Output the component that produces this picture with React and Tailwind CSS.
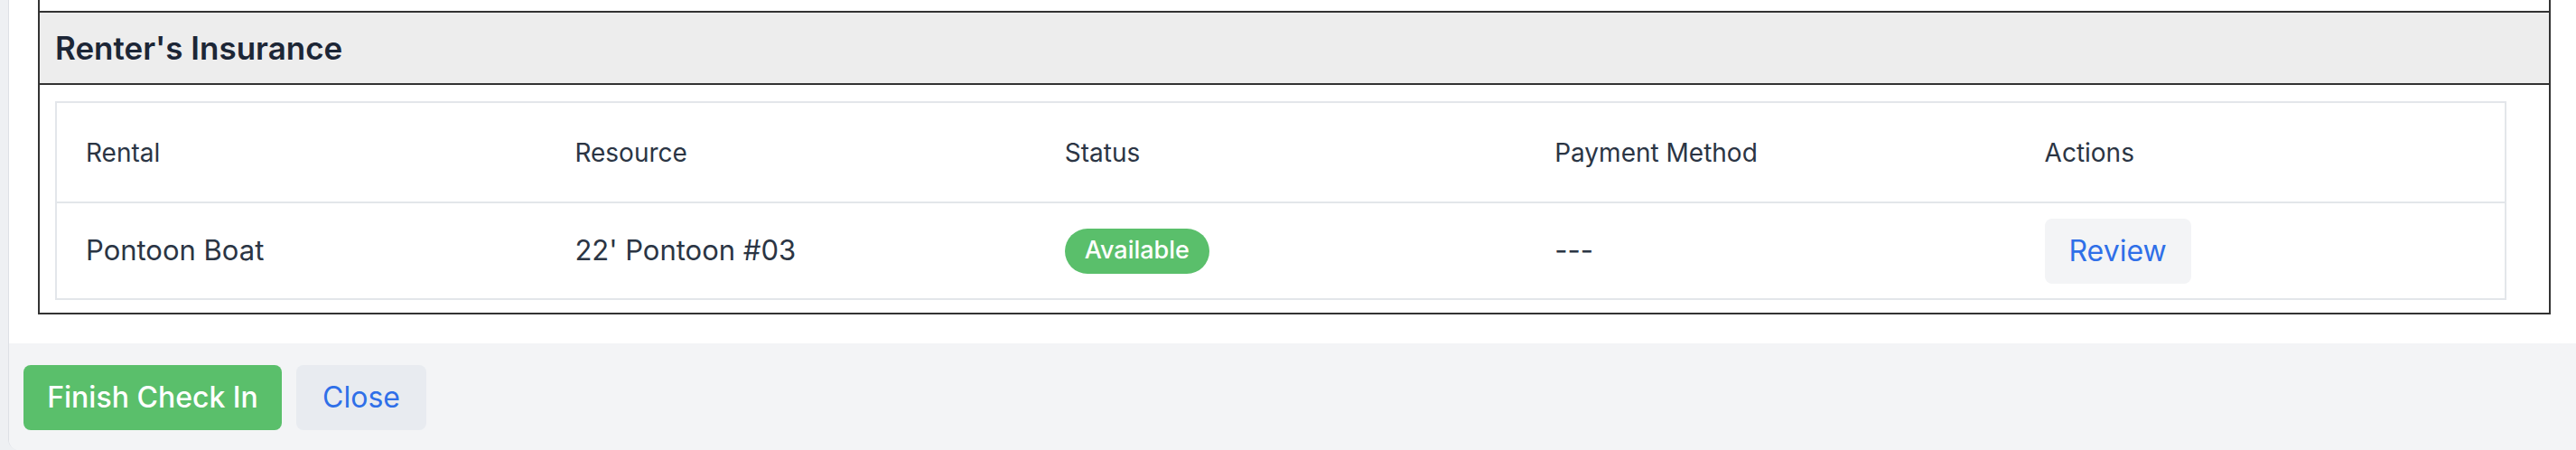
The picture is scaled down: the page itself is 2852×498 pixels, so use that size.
const columns = ['Rental', 'Resource', 'Status', 'Payment Method', 'Actions']

function InsuranceTable() {
  return (
    <table className="w-[2714px] table-fixed border-collapse border-2 border-[#e3e6ea] text-[#2b3544]">
      <thead>
        <tr className="h-[111px] border-b-2 border-[#e3e6ea]">
          {columns.map(col => (
            <th key={col} className="w-[542px] pl-8 text-left align-middle text-[28px] font-normal">
              {col}
            </th>
          ))}
        </tr>
      </thead>
      <tbody>
        <tr className="h-[107px]">
          <td className="pl-8 align-middle text-[31px]">Pontoon Boat</td>
          <td className="pl-8 align-middle text-[31px]">22' Pontoon #03</td>
          <td className="pl-8 align-middle">
            <span className="inline-flex h-[50px] w-[160px] items-center justify-center rounded-full bg-[#5abf6b] text-[27px] font-medium text-white">
              Available
            </span>
          </td>
          <td className="pl-8 align-middle text-[31px]">---</td>
          <td className="pl-8 align-middle">
            <button className="flex h-[72px] w-[162px] items-center justify-center rounded-lg bg-[#f3f4f6] text-[32px] text-[#2f6fe8]">
              Review
            </button>
          </td>
        </tr>
      </tbody>
    </table>
  )
}

export default function App() {
  return (
    <div className="flex h-[498px] w-[2852px] overflow-hidden bg-[#eef0f3] pl-[9px] font-['Inter',sans-serif]">
      <div className="flex flex-1 flex-col overflow-hidden rounded-bl-xl border-l border-[#dde0e5] bg-white">
        {/* Body */}
        <div className="px-8 pb-8">
          <div className="w-[2782px] border-x-2 border-b-2 border-[#333333]">
            <div className="h-3" />
            {/* Section header */}
            <div className="flex h-[82px] items-center border-y-2 border-[#333333] bg-[#ededed] px-[17px]">
              <h3 className="text-[35px] font-semibold text-[#1c2636]">Renter's Insurance</h3>
            </div>
            <div className="pl-[17px] pt-[18px] pb-[14px]">
              <InsuranceTable />
            </div>
          </div>
        </div>

        {/* Footer */}
        <div className="flex flex-1 gap-4 bg-[#f3f4f6] px-4 pt-6">
          <button className="flex h-[72px] w-[286px] items-center justify-center rounded-lg bg-[#5abf6b] text-[32px] font-medium text-white">
            Finish Check In
          </button>
          <button className="flex h-[72px] w-[144px] items-center justify-center rounded-lg bg-[#e8ebf0] text-[32px] text-[#2f6fe8]">
            Close
          </button>
        </div>
      </div>
    </div>
  )
}
